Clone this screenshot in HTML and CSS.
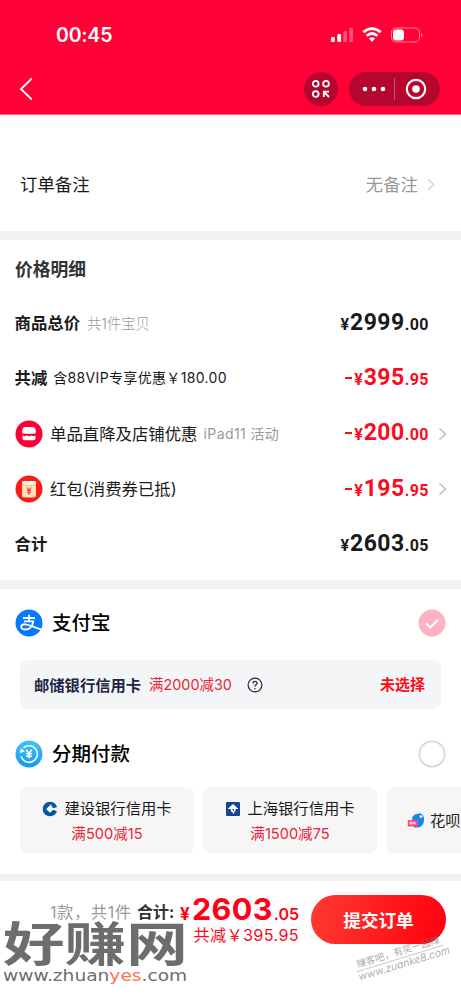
FILE: index.html
```html
<!DOCTYPE html>
<html lang="zh-CN">
<head>
<meta charset="utf-8">
<title>确认订单</title>
<link rel="stylesheet" href="styles.css">
</head>
<body>
<header class="top">
  <div class="status">
    <span class="clock">00:45</span>
    <svg class="status-icons" width="94" height="18" viewBox="0 0 94 18" fill="#fff">
      <rect x="1" y="11" width="3.8" height="5" rx="1"/><rect x="7.3" y="8" width="3.8" height="8" rx="1"/>
      <rect x="13.2" y="5" width="3.8" height="11" rx="1" opacity=".3"/><rect x="19.2" y="1.5" width="3.8" height="14.500" rx="1" opacity=".3"/>
      <g fill="none" stroke="#fff" stroke-width="2.800"><path d="M33.300 6.200Q42 -1 50.700 6.200M36.500 9.800Q42 5.200 47.500 9.800"/></g>
      <path d="M39 12.500Q42 9.900 45 12.500L42 16Z"/>
      <rect x="61.500" y="2" width="28" height="14" rx="4.500" fill="none" stroke="#fff" opacity=".5"/>
      <rect x="63" y="3.500" width="11" height="11" rx="3.300"/><path d="M91 6.500q2.500 2.500 0 5z" opacity=".5"/>
    </svg>
  </div>
  <nav class="nav">
    <svg class="back" width="16" height="24" viewBox="0 0 16 24"><path d="M13.800 1.500L3 12l10.800 10.500" fill="none" stroke="#fff" stroke-width="1.800"/></svg>
    <div class="scan"><svg width="20" height="20" viewBox="0 0 20 20" fill="none" stroke="#fff" stroke-width="1.800"><circle cx="4.700" cy="4.700" r="2.900"/><circle cx="15" cy="4.700" r="2.900"/><circle cx="4.700" cy="15" r="2.900"/><path d="M12.800 18V12.700H18M13 13l5 5"/></svg></div>
    <div class="capsule">
      <svg width="91" height="34" viewBox="0 0 91 34" fill="#fff"><circle cx="16" cy="17" r="2.300"/><circle cx="25" cy="17" r="2.300"/><circle cx="34" cy="17" r="2.300"/><path d="M45 6h1v22h-1z" opacity=".3"/><circle cx="67" cy="17" r="9.200" fill="none" stroke="#fff" stroke-width="2.200"/><circle cx="67" cy="17" r="3.800"/></svg>
    </div>
  </nav>
</header>

<section class="note">
  <span>订单备注</span>
  <span class="note-value">无备注</span>
  <svg class="arrow light" viewBox="0 0 9 14"><path d="M1.500 1.500L7.500 7l-6 5.500"/></svg>
</section>

<section class="prices">
  <h2>价格明细</h2>
  <div class="row"><b>商品总价</b><span class="hint pieces">共1件宝贝</span><span class="money"><i>¥</i>2999<small>.00</small></span></div>
  <div class="row"><b>共减</b><span class="vip">含88VIP专享优惠￥180.00</span><span class="money red"><em></em><i>¥</i>395<small>.95</small></span></div>
  <div class="row">
    <svg class="badge" viewBox="0 0 28 28"><circle cx="14" cy="14" r="13.500" fill="#fb0036"/><path d="M10 7h8q2.300 0 2.600 2.500l.4 2.500q.2 1.800-1.600 1.800H8.600Q6.800 13.800 7 12l.4-2.500Q7.700 7 10 7zM7.500 15.500l2 .8 2.200-.8 2.300.8 2.300-.8 2.200.8 2-.8v3q0 1.800-1.900 1.800H9.400q-1.900 0-1.900-1.800z" fill="#fff"/></svg>
    <span class="label">单品直降及店铺优惠</span><span class="hint event">iPad11 活动</span><span class="money red"><em></em><i>¥</i>200<small>.00</small></span>
    <svg class="arrow" viewBox="0 0 9 14"><path d="M1.500 1.500L7.500 7l-6 5.500"/></svg>
  </div>
  <div class="row">
    <svg class="badge" viewBox="0 0 28 28"><circle cx="14" cy="14" r="13.500" fill="#fa1c16"/><rect x="7" y="6" width="14" height="16.500" rx="2" fill="#ffe2bb"/><path d="M7 8q0-2 2-2h10q2 0 2 2v1.500q-7 2-14 0z" fill="#fff5e0"/><path d="M7 9.800q7 1.700 14 0" fill="none" stroke="#f5a77c" stroke-width=".7"/><path d="M12 12.500l2 3 2-3M14 15.500v4M12 15.800h4M12 17.700h4" fill="none" stroke="#ef3325" stroke-width="1.100"/></svg>
    <span class="label">红包(消费券已抵)</span><span class="money red"><em></em><i>¥</i>195<small>.95</small></span>
    <svg class="arrow" viewBox="0 0 9 14"><path d="M1.500 1.500L7.500 7l-6 5.500"/></svg>
  </div>
  <div class="row"><b>合计</b><span class="money"><i>¥</i>2603<small>.05</small></span></div>
</section>

<section class="pay">
  <div class="method first">
    <svg class="badge" viewBox="0 0 28 28"><circle cx="14" cy="14" r="13.500" fill="#0878fe"/><path d="M8 9h12M14 5.800v6M9 12.300h9.300Q16.700 20.800 10 20.500q-4-.3-3.800-2.800.4-2.700 4.200-2.400c4 .3 7.700 2.800 15.500 5.100" fill="none" stroke="#fff" stroke-width="1.800"/></svg>
    <span>支付宝</span>
    <svg class="badge choice" viewBox="0 0 28 28"><circle cx="14" cy="14" r="13.500" fill="#ffb1c4"/><path d="M8 14.300l4.300 4.200 8-8" fill="none" stroke="#fff" stroke-width="2"/></svg>
  </div>
  <div class="coupon">
    <b>邮储银行信用卡</b><span class="deal">满2000减30</span>
    <svg width="16" height="16" viewBox="0 0 16 16" fill="none" stroke="#252b38" stroke-width="1.200"><circle cx="8" cy="8" r="6.900"/><path d="M5.900 6.500Q6 4.300 8 4.300q2.100 0 2.100 1.900Q10.100 7.300 8 8.600v1"/><path d="M8 10.900v1.300"/></svg>
    <strong>未选择</strong>
  </div>
  <div class="method">
    <svg class="badge" viewBox="0 0 28 28"><defs><linearGradient id="sky" x2="0" y2="1"><stop stop-color="#40c5f5"/><stop offset="1" stop-color="#1696f5"/></linearGradient></defs><circle cx="14" cy="14" r="13.500" fill="url(#sky)"/><path d="M8.500 7.800A8.300 8.300 0 1 1 6.100 16.500" fill="none" stroke="#fff" stroke-width="1.600"/><path d="M5 13l.8-5 4.200 3.600z" fill="#fff"/><path d="M11.300 9.800l2.700 3.700 2.700-3.700M14 13.500V18.500M11 13.800h6M11 16.200h6" fill="none" stroke="#fff" stroke-width="1.500"/></svg>
    <span>分期付款</span>
    <svg class="badge choice" viewBox="0 0 28 28"><circle cx="14" cy="14" r="12.700" fill="none" stroke="#d7d7d7" stroke-width="1.800"/></svg>
  </div>
  <div class="cards">
    <div class="card">
      <div><svg width="16" height="16" viewBox="0 0 16 16"><circle cx="8" cy="8" r="7.300" fill="#07549f"/><path d="M8 4.200L11.800 8 8 11.800 4.200 8z" fill="#fff"/><path d="M11 7.200L15.500 6v4.500l-4.500-1.700z" fill="#f6f6f6"/><path d="M8 3.500l2.500 2.300" stroke="#f6f6f6"/></svg>建设银行信用卡</div>
      <span>满500减15</span>
    </div>
    <div class="card">
      <div><svg width="16" height="16" viewBox="0 0 16 16"><rect x="1" y="1" width="14" height="14" rx="1" fill="#104692"/><path d="M2.500 8L8 3l5.500 5h-3v2.500H9V8H7l2 2.500V13L5.800 10V8z" fill="#fff"/><path d="M8.500 10.500l2.500-1-1.500 3z" fill="#de7481"/></svg>上海银行信用卡</div>
      <span>满1500减75</span>
    </div>
    <div class="card huabei">
      <svg width="18" height="18" viewBox="0 0 18 18"><path d="M5 6q2-4.500 6-4 1-1.300 3-.5 3.500 2 3 7-.3 5.500-5.500 7H7z" fill="#1686ee"/><circle cx="14" cy="4.500" r="1.500" fill="#d9f1ff"/><rect x=".8" y="8" width="10" height="6.500" rx="1" fill="#f34c7a"/><path d="M3 10h2v2H3zM7 9.700v3M6 11h3" fill="none" stroke="#fff" stroke-width=".8"/></svg><span>花呗</span>
    </div>
  </div>
</section>

<footer class="bar">
  <div class="total">
    <div class="sum"><span class="count">1款，共1件</span><b>合计:</b><i>¥</i><strong>2603</strong><small>.05</small></div>
    <div class="saved">共减￥395.95</div>
  </div>
  <button>提交订单</button>
  <div class="stamp"><div>赚客吧，有奖一起赚</div><div class="stamp-url">www.zuanke8.com</div></div>
  <div class="mark"><div class="mark-name">好赚网</div><div class="mark-url">www.zhuan<span>yes</span>.com</div></div>
</footer>
</body>
</html>
```

FILE: styles.css
```css
* { box-sizing: border-box; }
body { margin: 0; width: 461px; height: 999px; overflow: hidden; background: #fff; color: #1a1a1a; font-family: Inter, "Noto Sans CJK SC", sans-serif; font-size: 17px; }
svg { display: block; flex: none; }
i, em { font-style: normal; }
span, b { white-space: nowrap; }

.top { height: 115px; background: #ff0037; border-bottom: 1px solid #ff6b86; color: #fff; }
.status { height: 63px; padding: 6px 37px 0 56px; display: flex; align-items: center; justify-content: space-between; }
.clock { font-size: 19.5px; font-weight: 600; letter-spacing: -.2px; }
.nav { height: 51px; display: flex; align-items: center; padding: 0 21px 0 18px; }
.scan { width: 34px; height: 34px; border-radius: 50%; background: #b4062f; margin-left: auto; display: grid; place-items: center; }
.capsule { width: 91px; height: 34px; border-radius: 17px; background: #b4062f; margin-left: 11px; }

.note { height: 116px; padding: 24px 26px 0 20px; display: flex; align-items: flex-start; line-height: 92px; font-size: 17.4px; }
.note-value { margin-left: auto; color: #999; }
.arrow { width: 9px; height: 14px; fill: none; stroke: #bcbcbc; stroke-width: 1.5; margin-left: 9px; }
.note .arrow { margin-top: 39px; width: 8px; height: 13px; }
.arrow.light { stroke: #d0d0d0; }

.prices { border-top: 9px solid #f1f1f1; border-bottom: 9px solid #f1f1f1; height: 358px; padding: 0 14px 0 15px; }
h2 { margin: 0; height: 55.5px; line-height: 59px; font-size: 17.8px; font-weight: 700; color: #333; }
.row { height: 55.3px; display: flex; align-items: center; padding-right: 18px; font-size: 16.4px; }
.row:has(.arrow) { padding-right: 0; }
.row > b, .row > .hint, .row > .label, .row > .vip { margin-bottom: 2px; }
.row b { font-weight: 600; margin-left: -.5px; }
.hint { color: #999; font-weight: 300; }
.pieces { font-size: 14.3px; margin-left: 7px; }
.vip { font-size: 14px; margin-left: 6px; letter-spacing: .34px; }
.badge { width: 28px; height: 28px; }
.label { margin-left: 7px; }
.event { font-size: 14px; margin-left: 6px; letter-spacing: .4px; font-weight: 400; }
.money { margin-left: auto; font-family: Roboto, sans-serif; font-weight: 700; font-size: 23px; line-height: 28px; letter-spacing: .45px; padding-top: 2px; }
.row:has(.arrow) .money { padding-top: 1px; }
.money i, .money small { font-size: 16px; }
.money i { margin-right: .5px; }
.money em { display: inline-block; width: 7px; height: 2px; background: #fb0b20; margin-right: 2px; vertical-align: 6px; }
.red { color: #fb0b20; }

.pay { height: 285px; }
.method { height: 71px; padding: 0 15px; display: flex; align-items: center; font-size: 19.5px; font-weight: 500; color: #000; }
.method.first { padding-bottom: 4px; }
.method > span { margin-left: 9px; line-height: 28px; }
.choice { margin-left: auto; }
.coupon { height: 49px; margin: 0 20px 9px; border-radius: 8px; background: #f4f5f7; display: flex; align-items: center; padding: 0 16px 0 14px; font-size: 15.3px; color: #202643; }
.coupon b, .coupon strong { margin-bottom: 2px; }
.deal { font-size: 14.4px; color: #ed1e36; margin: 0 15px 3px 8px; }
.coupon strong { margin-left: auto; color: #ff0b20; font-size: 15px; }
.cards { display: flex; gap: 9px; padding-left: 20px; overflow: hidden; margin-top: -2px; }
.card { flex: none; width: 174px; height: 67px; border-radius: 8px; background: #f6f6f6; display: flex; flex-direction: column; align-items: center; font-size: 15.3px; line-height: 24px; padding-top: 9px; }
.card div { display: flex; align-items: center; gap: 6px; height: 26px; }
.card > span { color: #ed1e36; font-size: 14.6px; height: 25px; line-height: 25px; }
.card.huabei { flex-direction: row; padding: 0 0 0 21px; gap: 5px; }
.card.huabei span { color: #222; font-size: 15.3px; }

.bar { height: 125px; border-top: 7px solid #f1f1f1; position: relative; display: flex; padding: 14px 15px 0 50px; }
.total { width: 249px; }
.sum { display: flex; align-items: baseline; height: 29px; line-height: 27px; white-space: nowrap; }
.count, .sum b { position: relative; top: -2px; }
.count { font-size: 16px; color: #999; letter-spacing: .8px; width: 87px; }
.sum b { font-size: 16px; color: #333; width: 43px; }
.sum i { color: #ff0019; font-size: 17px; font-weight: 700; width: 12px; }
.sum strong { font-size: 30.5px; color: #ff0019; letter-spacing: .4px; }
.sum small { font-size: 16px; font-weight: 600; color: #ff0019; margin-left: auto; }
.saved { text-align: right; color: #f50a28; font-size: 16.2px; letter-spacing: .35px; line-height: 22px; }
button { width: 135px; height: 49px; border: 0; border-radius: 25px; margin-left: 12px; background: linear-gradient(100deg, #ff3a31, #ff0010); color: #fff; font: 600 17.6px Inter, "Noto Sans CJK SC", sans-serif; padding: 0; }

.stamp { position: absolute; left: 355px; top: 65px; width: 90px; transform: rotate(-17deg); color: rgba(115, 115, 115, .6); font-size: 9.6px; line-height: 12px; white-space: nowrap; text-align: center; }
.stamp-url { font-size: 10.5px; border-top: 1px solid #ccc; font-style: italic; }
.mark { position: absolute; left: 3px; top: 40px; color: #6d6d6d; white-space: nowrap; }
.mark-name { font-size: 47px; font-weight: 700; line-height: 46px; height: 45px; transform: scaleX(1.31); transform-origin: 0 0; }
.mark-url { font: 15px/20px "DejaVu Sans", sans-serif; transform: scaleX(1.24); transform-origin: 0 0; }
.mark-url span { color: #ff7352; }
```
